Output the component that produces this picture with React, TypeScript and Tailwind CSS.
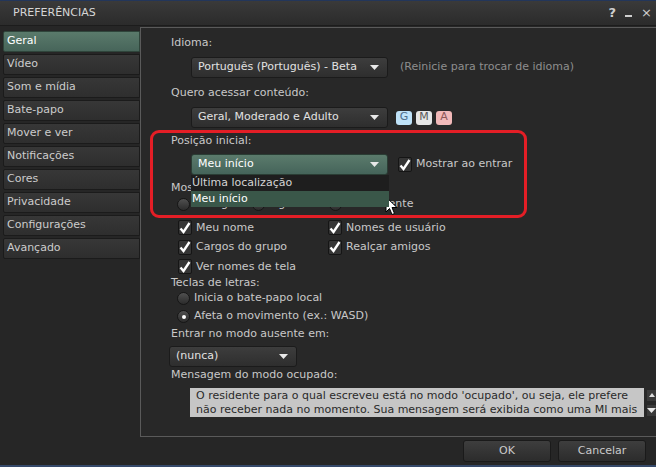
import type { JSX, ReactNode } from "react";

const tabs = ["Geral", "Vídeo", "Som e mídia", "Bate-papo", "Mover e ver", "Notificações", "Cores", "Privacidade", "Configurações", "Avançado"];

const Arrow = ({ color = "#e8e8e8" }: { color?: string }) => (
    <svg width="9" height="5" viewBox="0 0 9 5"><path d="M0 0h9L4.5 5z" fill={color} /></svg>
);

const Dropdown = ({ text, width, green = false }: { text: string; width: string; green?: boolean }) => (
    <div className={`${width} h-[21px] flex items-center justify-between pl-[6px] pr-[8px] rounded-[3px] border
        ${green ? "border-[#2a3d34] bg-gradient-to-b from-[#5b7b6c] to-[#45645a] text-white"
            : "border-[#1b1b1b] bg-gradient-to-b from-[#3d3d3d] to-[#2e2e2e] text-[#e2e2e2]"}`}>
        <span>{text}</span>
        <Arrow />
    </div>
);

const Check = ({ label }: { label: string }) => (
    <div className="flex items-center gap-[4px]">
        <div className="w-[14px] h-[15px] rounded-[2px] border border-[#151515] bg-[#353535] flex items-center justify-center">
            <svg width="12" height="12" viewBox="0 0 12 12"><path d="M1.5 6.5L4.5 10L10.5 1" stroke="#fff" strokeWidth="2.4" fill="none" /></svg>
        </div>
        <span>{label}</span>
    </div>
);

const Radio = ({ label, on = false }: { label: string; on?: boolean }) => (
    <div className="flex items-center gap-[4px]">
        <div className="w-[13px] h-[13px] rounded-full border border-[#161616] bg-gradient-to-b from-[#505050] to-[#2c2c2c] flex items-center justify-center">
            {on && <div className="w-[4px] h-[4px] rounded-full bg-white" />}
        </div>
        <span>{label}</span>
    </div>
);

const Row = ({ children, cls = "" }: { children: ReactNode; cls?: string }) => (
    <div className={`h-[16px] flex items-center ${cls}`}>{children}</div>
);

export default function App(): JSX.Element {
    return (
        <div className="relative w-[656px] h-[467px] overflow-hidden bg-[#262626] text-[11px] text-[#c9c9c9]"
            style={{ fontFamily: '"DejaVu Sans", sans-serif' }}>
            <div className="h-[1px] bg-[#23365a]" />
            <div className="h-[25px] flex items-center justify-between pl-[13px] pr-[4px] bg-gradient-to-b from-[#3a3a3a] to-[#2b2b2b] border-b border-[#1c1c1c]">
                <span className="text-[#d6d6d6]">PREFERÊNCIAS</span>
                <div className="flex items-center gap-[9px] text-[#cfcfcf] text-[13px] font-bold">
                    <span>?</span>
                    <span className="w-[7px] h-[2px] bg-[#cfcfcf] mt-[5px]" />
                    <span className="font-normal">×</span>
                </div>
            </div>

            <div className="flex">
                <div className="w-[141px] pl-[3px] pt-[5px] flex flex-col gap-[2px]">
                    {tabs.map((t, i) => (
                        <div key={t} className={`h-[21px] flex items-center pl-[3px] rounded-l-[2px] border
                            ${i === 0 ? "bg-gradient-to-b from-[#5a7a6b] to-[#47655a] border-[#2f453b] text-white"
                                : "bg-gradient-to-b from-[#373737] to-[#2e2e2e] border-[#1b1b1b] text-[#cccccc]"}`}>
                            {t}
                        </div>
                    ))}
                </div>

                <div className="flex-1 h-[410px] mt-[1px] border-l border-t border-b border-[#5a5a5a] bg-[#282828] pl-[30px]">
                    <Row cls="mt-[7px]">Idioma:</Row>
                    <div className="mt-[6px] ml-[20px] flex items-center gap-[12px]">
                        <Dropdown text="Português (Português) - Beta" width="w-[197px]" />
                        <span className="text-[#8e8e8e]">(Reinicie para trocar de idioma)</span>
                    </div>
                    <Row cls="mt-[7px]">Quero acessar conteúdo:</Row>
                    <div className="mt-[6px] ml-[20px] flex items-center gap-[8px]">
                        <Dropdown text="Geral, Moderado e Adulto" width="w-[197px]" />
                        <div className="flex gap-[4px] text-[11px]">
                            <span className="w-[16px] h-[14px] rounded-[3px] bg-[#bfe2f8] text-[#4e6f8c] flex items-center justify-center">G</span>
                            <span className="w-[16px] h-[14px] rounded-[3px] bg-[#e6e6e6] text-[#5a5a5a] flex items-center justify-center">M</span>
                            <span className="w-[16px] h-[14px] rounded-[3px] bg-[#f2b9b9] text-[#8c5858] flex items-center justify-center">A</span>
                        </div>
                    </div>
                    <Row cls="mt-[5px]">Posição inicial:</Row>
                    <div className="mt-[5px] ml-[20px] flex items-center gap-[10px]">
                        <div className="relative">
                            <Dropdown text="Meu início" width="w-[197px]" green />
                            <div className="absolute left-0 top-[21px] w-[198px] z-10">
                                <div className="h-[16px] bg-[#1e1e1e] pl-[1px] flex items-center text-[#d4d4d4]">Última localização</div>
                                <div className="h-[16px] bg-[#3a5749] pl-[1px] flex items-center text-white">Meu início</div>
                            </div>
                        </div>
                        <Check label="Mostrar ao entrar" />
                    </div>
                    <Row cls="mt-[5px]">Mostrar nomes:</Row>
                    <div className="h-[16px] flex items-center pl-[6px]">
                        <div className="w-[75px]"><Radio label="Desligado" /></div>
                        <div className="w-[77px]"><Radio label="Ligado" /></div>
                        <Radio label="Brevemente" />
                    </div>
                    <div className="mt-[6px] pl-[7px] grid grid-cols-[150px_1fr] auto-rows-[19.5px] items-center">
                        <Check label="Meu nome" />
                        <Check label="Nomes de usuário" />
                        <Check label="Cargos do grupo" />
                        <Check label="Realçar amigos" />
                        <Check label="Ver nomes de tela" />
                    </div>
                    <div className="h-[14px] flex items-center">Teclas de letras:</div>
                    <div className="pl-[6px]">
                        <div className="h-[16px] flex items-center"><Radio label="Inicia o bate-papo local" /></div>
                        <div className="h-[16px] mt-[2px] flex items-center"><Radio label="Afeta o movimento (ex.: WASD)" on /></div>
                    </div>
                    <Row cls="mt-[2px]">Entrar no modo ausente em:</Row>
                    <div className="mt-[3px] -ml-[2px]">
                        <Dropdown text="(nunca)" width="w-[128px]" />
                    </div>
                    <Row cls="mt-[1px]">Mensagem do modo ocupado:</Row>
                    <div className="mt-[4px] ml-[19px] flex items-start gap-[3px]">
                        <div className="w-[454px] h-[29px] bg-[#c6c6c6] text-[#2a2a2a] pl-[6px] pt-[1px] leading-[14px] overflow-hidden">
                            O residente para o qual escreveu está no modo 'ocupado', ou seja, ele prefere não receber nada no momento. Sua mensagem será exibida como uma MI mais
                        </div>
                        <div className="flex flex-col gap-[4px] pt-[2px]">
                            <div className="w-[9px] h-[11px] bg-[#3a3a3a] flex items-center justify-center">
                                <svg width="6" height="4" viewBox="0 0 6 4"><path d="M0 4h6L3 0z" fill="#ddd" /></svg>
                            </div>
                            <div className="w-[9px] h-[11px] bg-[#3a3a3a] flex items-center justify-center">
                                <Arrow />
                            </div>
                        </div>
                    </div>
                </div>
            </div>

            <div className="flex justify-end gap-[7px] pr-[10px] mt-[3px]">
                {["OK", "Cancelar"].map((b) => (
                    <div key={b} className="w-[88px] h-[22px] rounded-[3px] border border-[#1a1a1a] bg-gradient-to-b from-[#3e3e3e] to-[#2c2c2c] flex items-center justify-center text-[#cacaca]">
                        {b}
                    </div>
                ))}
            </div>
            <div className="absolute left-0 bottom-0 w-full h-[2px] bg-[#35496a]" />

            <div className="absolute left-[150px] top-[130px] w-[377px] h-[88px] border-[3px] border-[#e41e26] rounded-[9px] pointer-events-none" />

            <svg className="absolute left-[385px] top-[196px]" width="13" height="20" viewBox="0 0 13 20">
                <path d="M1 1v15l3.5-3.5 2.5 6 2.5-1-2.5-6H12z" fill="#fff" stroke="#000" strokeWidth="1" />
            </svg>
        </div>
    );
}
